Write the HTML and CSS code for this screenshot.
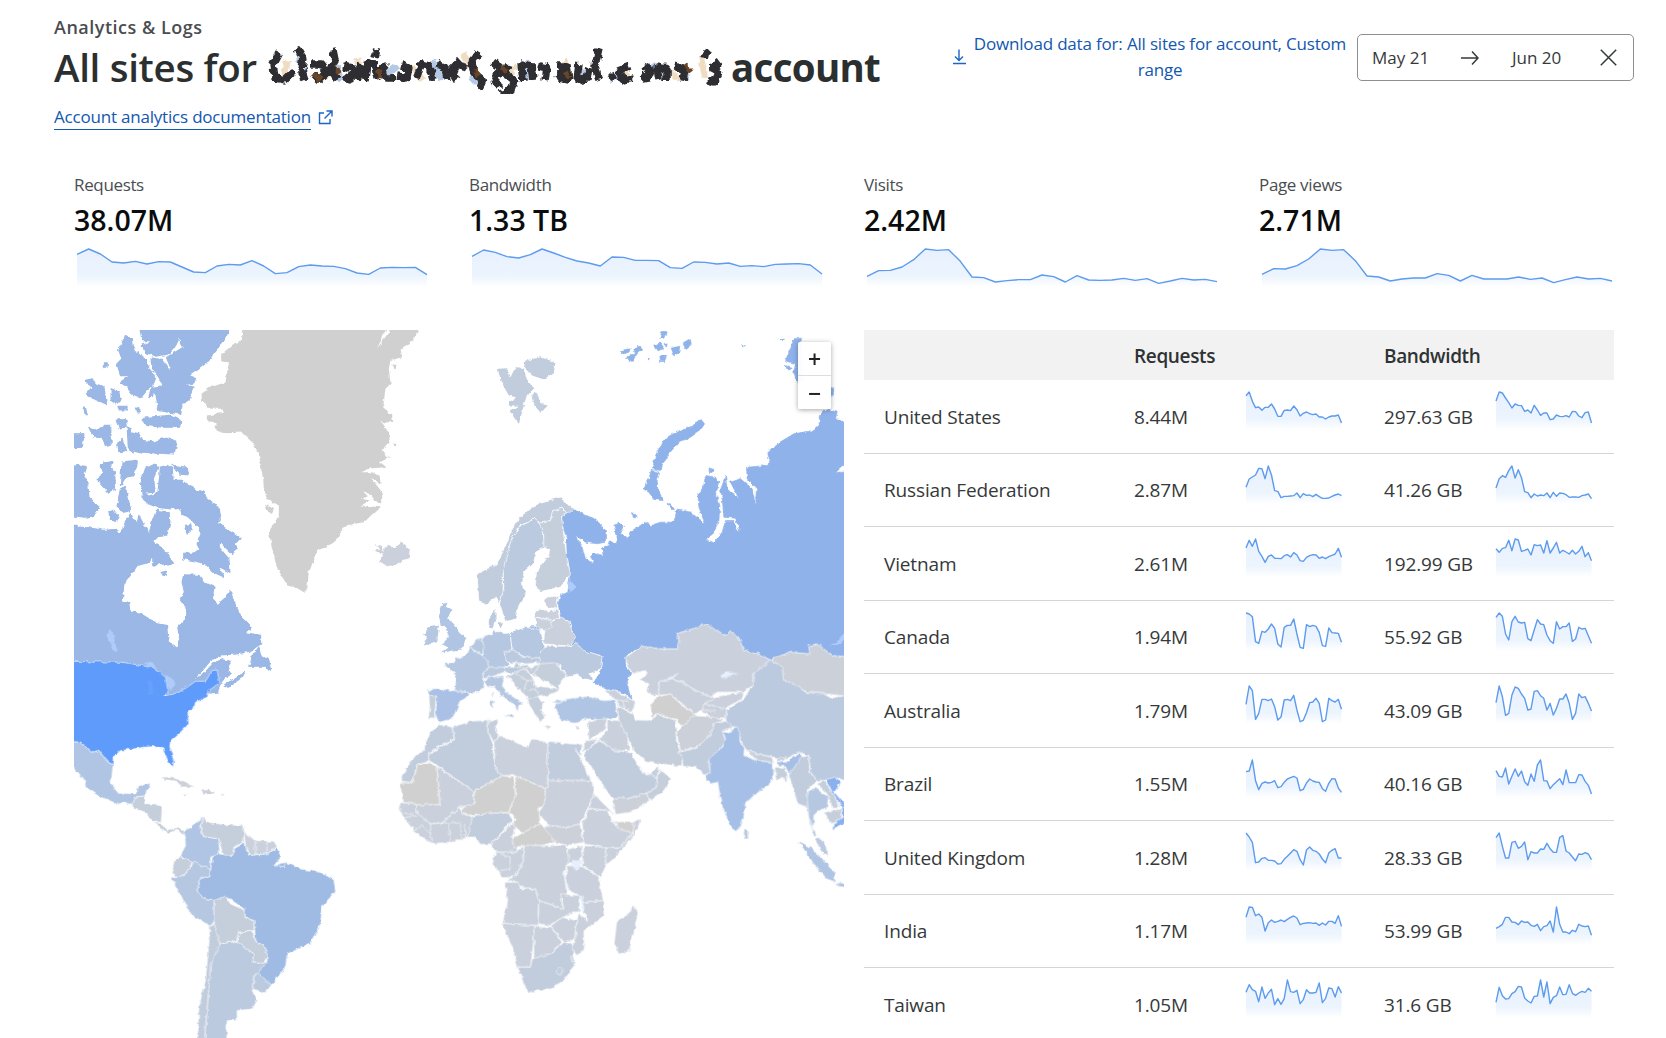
FILE: index.html
```html
<!DOCTYPE html>
<html lang="en">
<head>
<meta charset="utf-8">
<title>Account analytics</title>
<link rel="stylesheet" href="styles.css">
</head>
<body>
<header class="page-header">
  <div class="heading">
    <p class="eyebrow">Analytics &amp; Logs</p>
    <h1 class="title">
      <span class="title-lead">All sites for</span>
      <svg class="redacted" width="460" height="48" viewBox="0 0 460 48" aria-hidden="true">
        <defs><filter id="shard" x="-2%" y="-10%" width="104%" height="120%"><feTurbulence type="fractalNoise" baseFrequency=".22" numOctaves="1" seed="4"/><feDisplacementMap in="SourceGraphic" scale="7" xChannelSelector="R" yChannelSelector="G"/></filter></defs>
        <g filter="url(#shard)" fill="none" stroke-linejoin="bevel">
          <path class="tint-warm" d="M22 14l-4 18M52 34l14-6M92 12l4 22M146 20l12 14M198 8l12 18M240 32l12-12M300 14l6 18M356 20l8 14M402 22l12 12M436 10l4 22"/>
          <path class="tint-cool" d="M34 8l6 26M68 12l8 22M118 32l14-12M168 14l8 20M206 30l12 12M262 14l2 20M312 20l8 14M344 34l14-8M388 18l10 14M418 20l4 14"/>
          <path class="ink" d="M14 6l-6 12 2 14 10 2 8-8M32 2l6 10-2 10 4 12M46 18l10 0 6 8-8 8-6-6M68 4l2 10-4 10 6 10M78 20l10 2-2 12-8-2M96 18l-4 16M100 34l2-18 8 4 2 12M112 3l-2 8M122 18l-6 6 4 8 10 0M136 20l8 2-2 10-10-2M152 32l4-14 8 2 4 14M172 18l8 4 2 12M192 34l-6-10 8-8 6 8M214 6l-8 10 4 12 8 6-4 8M228 16l8 6-6 12 4 8M244 18l-4 12 10 4-4 10-10 4M258 34l-2-16 10 2 2 14M274 20l8 2-2 12M292 20l10 0 2 14-10-2 4-10M314 18l-2 16 10-2 2-10M334 2l-4 18 4 14M344 28l6 6M364 20l-10 4 4 10 10-2M378 20l8 4-4 10-6-6M394 34l-2-14 10 2 0 12M410 20l10 4-2 10M442 4l-2 8M454 16l-8 6 8 4-4 10-8-2"/>
          <path class="brown" d="M48 28l8 6M70 22l4 6M112 24l4 8M210 24l4 6M236 22l6 4M300 26l4 6M420 18l6 8"/>
        </g>
      </svg>
      <span class="title-tail">account</span>
    </h1>
    <p class="doc"><a class="doc-link" href="#">Account analytics documentation</a><svg class="external" width="15" height="15" viewBox="0 0 15 15"><path d="M6 3H1.500V13.500H12V9M8.500 1H14V6.500M14 1L6.500 8.500"/></svg></p>
  </div>
  <div class="actions">
    <a class="download" href="#">
      <svg width="16" height="16" viewBox="0 0 16 16"><path d="M8 .5V11M4 7.500L8 11.500L12 7.500M2 14.500H15"/></svg>
      <span>Download data for: All sites for account, Custom range</span>
    </a>
    <div class="dates">
      <span class="from">May 21</span>
      <svg width="18" height="16" viewBox="0 0 18 16"><path d="M0 8H17M11 1.500L17 8L11 14.500"/></svg>
      <span class="to">Jun 20</span>
      <svg class="clear" width="17" height="17" viewBox="0 0 17 17"><path d="M.8 .8L16.200 16.200M16.200 .8L.8 16.200"/></svg>
    </div>
  </div>
</header>

<section class="stats">
  <div class="stat"><p class="label">Requests</p><p class="value">38.07M</p><svg class="trend" data-y="284,268,283,307,310,305,313,306,307,322,337,339,319,314,316,303,319,342,339,321,316,319,320,327,340,344,325,323,324,323,345"></svg></div>
  <div class="stat"><p class="label">Bandwidth</p><p class="value">1.33 TB</p><svg class="trend" data-y="290,271,278,291,295,285,268,280,293,304,310,319,292,293,302,302,303,324,326,307,308,313,310,320,318,321,314,313,312,316,343"></svg></div>
  <div class="stat"><p class="label">Visits</p><p class="value">2.42M</p><svg class="trend" data-y="350,333,332,322,300,268,272,270,305,352,354,367,363,360,360,346,351,367,348,361,362,361,356,362,357,371,364,356,361,359,366"></svg></div>
  <div class="stat"><p class="label">Page views</p><p class="value">2.71M</p><svg class="trend" data-y="344,327,328,318,298,268,272,270,303,349,352,364,358,355,355,342,347,364,347,358,358,358,352,359,355,369,360,352,358,356,364"></svg></div>
</section>

<main class="content">
  <div class="map">
    <svg width="770" height="708" viewBox="74 330 770 708">
      <defs><filter id="coast" filterUnits="userSpaceOnUse" x="60" y="316" width="800" height="740"><feTurbulence type="fractalNoise" baseFrequency=".2" numOctaves="2" seed="9"/><feDisplacementMap in="SourceGraphic" scale="4" xChannelSelector="R" yChannelSelector="G"/></filter></defs>
      <g filter="url(#coast)">
      <!-- North Atlantic and the Arctic -->
      <g transform="translate(70.500 325.500) scale(.33333)">
        <g class="canada">
          <path d="M-20 600L20 600 20 640 24 605 60 608 100 615 140 612 150 630 165 590 180 565 200 600 205 570 235 628 245 590 258 555 295 560 298 590 290 625 265 630 245 650 270 665 295 690 305 715 285 720 265 710 250 725 250 690 235 710 200 720 190 735 175 750 160 775 155 825 175 835 180 860 205 862 235 880 260 895 288 900 292 945 320 968 328 940 322 905 348 880 350 850 330 820 342 800 335 770 340 748 385 750 400 770 430 785 425 820 445 838 465 820 478 795 495 840 515 880 545 905 525 922 570 930 570 955 540 975 500 985 450 988 420 1005 395 1035 360 1070 400 1045 430 1012 455 1003 482 1008 470 1025 480 1045 455 1062 440 1100 300 1115 280 1100 200 1030 -20 1020z"/>
          <path d="M215 518L215 500 235 512 262 505 268 450 270 425 290 420 305 430 308 465 335 465 345 475 380 495 400 500 410 520 445 545 450 575 440 590 480 620 508 640 490 655 500 670 485 685 450 650 445 665 475 700 478 740 440 720 462 755 430 740 405 715 370 705 340 700 340 680 365 685 385 670 380 655 392 625 385 605 360 580 335 565 325 545 300 550 260 545 235 535z"/>
          <path d="M210 475L225 430 255 415 262 425 248 460 255 500 215 503zM155 410L195 405 200 412 190 450 165 455 150 480zM150 490L165 485 175 530 180 555 160 560 140 545zM90 415L125 408 118 430 132 440 135 490 115 500 80 460 100 445zM-20 425L30 420 48 425 40 450 52 480 55 515 85 545 70 570 45 575-20 568zM115 560L130 555 145 575 135 590 120 580zM345 600L360 598 365 615 350 625zM305 420L345 425 352 448 325 445zM185 320L205 325 215 345 250 350 290 335 310 345 318 355 310 385 250 382 215 380 185 372zM275 740L288 738 282 750z"/>
          <path d="M205-10L490-10 475 15 460 45 430 80 415 105 385 130 355 150 375 158 370 172 335 178 370 185 355 225 335 235 330 265 265 255 260 225 255 200 235 215 245 185 280 182 262 150 245 130 242 98 272 102 298 137 302 130 288 96 345 62 330 55 330 30 315 60 290 86 255 92 225 80 215 60 250 45 215 45z"/>
          <path d="M215 280L240 275 300 270 330 285 328 305 280 305 230 300zM165 30L185 40 190 75 225 100 235 130 255 155 250 175 225 195 215 215 185 205 170 185 150 170 180 150 150 150 140 115 155 100 145 75zM45 165L65 160 75 175 100 185 108 235 80 225 48 205 65 185zM122 190L145 200 152 220 138 235 122 225zM55 305L80 315 100 300 120 300 122 355 105 360 95 335 70 335zM140 280L165 280 170 300 150 310zM142 350L155 342 168 375 145 378zM-20 325L40 325 35 365-20 368zM40 245L45 245 50 268 44 264zM142 243L170 243 168 253 145 253zM170 305L182 310 188 380 174 370zM102 112L110 112 110 125 102 125zM195 248L208 252 204 266z"/>
          <path d="M538 1025L545 995 565 965 570 990 595 1005 603 1035 585 1025zM463 1077L495 1060 522 1040 515 1055 470 1085z"/>
        </g>
        <path class="lake" d="M118 910L130 930 140 980 128 975 108 930z"/>
        <path class="gray coastline" d="M515-10L955-10 945 15 920 68 955 20 965-10 1060-10 1045 15 1020 55 990 70 995 95 960 105 955 130 960 175 945 190 938 245 965 270 968 290 930 290 955 320 958 350 935 375 948 395 960 395 925 410 945 425 900 428 872 440 905 440 928 452 930 475 900 455 935 500 935 530 915 530 895 505 875 495 892 512 870 520 900 525 870 540 928 545 880 590 825 600 800 645 765 665 740 675 730 705 715 740 710 790 700 800 675 785 650 780 630 745 615 710 605 670 595 620 610 595 625 570 625 540 590 520 580 490 578 460 565 385 545 350 510 318 450 322 430 305 440 295 412 285 412 270 460 262 455 250 420 250 395 225 393 205 420 185 465 170 475 110 455 108 455 85 490 55 515 40zM585 538L610 550 605 565 585 555zM965 118L978 118 975 132zM965 355L978 355 975 366z"/>
        <path class="t4 coastline" d="M912 655L935 665 935 680 950 658 975 665 995 650 1018 670 1015 695 970 722 945 718 925 710 940 690 912 675 930 672z"/>
        <path class="t9 coastline" d="M1115 835L1132 832 1125 845 1145 850 1130 880 1150 895 1165 920 1185 940 1180 960 1175 972 1145 975 1110 985 1135 965 1115 955 1135 935 1125 905 1110 900 1105 860z"/>
        <path class="t8 coastline" d="M1075 905L1105 900 1100 950 1060 960 1070 940 1060 925z"/>
      </g>
      <!-- Northern Europe and Russia -->
      <g transform="translate(460.500 325.500) scale(.33333)">
        <path class="t6 coastline" d="M112 130L140 128 150 155 160 135 175 125 190 130 200 165 222 190 200 205 190 240 175 295 160 275 148 255 175 240 145 240 145 230 170 215 145 210 120 165zM195 105L240 95 285 110 280 140 250 162 215 150 190 125zM215 205L230 200 240 235 262 240 240 262 222 240z"/>
        <g class="russia">
          <path d="M722 282L732 295 725 310 690 335 655 350 625 385 610 410 600 435 575 430 585 390 600 360 620 335 650 318 690 305zM572 435L598 440 590 465 592 490 608 525 580 522 565 500 548 490 565 460zM1000 40L1022 38 1030 170 1010 170 1000 140 1005 115 975 105 985 80zM972 120L995 125 985 137zM1110 185L1120 190 1118 210 1108 205z"/>
          <path d="M480 75L510 70 505 80 490 85zM520 70L535 60 545 72 530 85 515 108 498 100 508 88 525 86zM605 18L618 18 610 38 597 38zM578 60L598 52 610 70 590 76zM632 68L658 62 655 82 640 88zM668 55L690 42 692 58 675 70zM598 92L618 90 612 108 600 108zM610 55L620 52 618 65zM845 58L852 60 846 64zM958 40L972 42 965 47zM560 96L567 96 563 104zM512 565L530 568 522 580zM623 535L630 535 642 552 632 552zM745 430L760 435 748 442zM208 904L240 904 240 912 208 912z"/>
          <path d="M340 550L375 570 405 580 435 615 435 650 410 655 375 650 345 630 365 665 375 700 400 715 390 690 400 680 428 692 425 670 445 660 450 645 468 655 470 630 460 600 475 590 492 602 480 625 500 638 515 615 555 590 570 600 600 590 640 590 650 550 690 560 735 595 715 545 712 505 728 490 735 450 768 455 775 470 765 500 778 540 775 590 755 630 735 640 760 652 785 620 795 585 820 585 828 612 838 615 825 578 790 575 785 520 780 490 795 450 800 490 815 505 835 515 820 490 810 470 840 460 875 490 885 540 888 490 860 460 858 425 920 420 930 410 920 380 950 355 1000 325 1060 315 1075 300 1080 270 1100 250 1130 260 1125 280 1190 305 1190 425 1150 420 1125 440 1150 440 1190 430 1190 995 1115 990 1090 970 1065 955 1045 960 1048 985 985 980 930 1003 895 985 850 975 835 935 810 915 795 930 760 910 740 895 710 905 650 925 655 945 650 970 600 970 545 962 500 985 495 1015 510 1045 498 1070 512 1120 495 1105 460 1093 440 1093 400 1070 420 1040 425 990 370 975 330 955 345 935 325 885 300 875 293 835 300 810 322 800 330 740 320 690 318 640 305 590 305 570z"/>
        </g>
        <path class="lake" d="M318 768L335 770 348 785 330 800zM1105 960L1130 950 1152 920 1158 930 1135 958z"/>
        <path class="t6" d="M50 745L110 715 140 650 160 600 190 565 240 530 300 515 325 540 345 550 320 565 305 548 280 555 270 585 235 590 220 575 205 590 175 600 150 650 140 700 128 730 128 800 115 835 105 815 75 838 55 825z"/>
        <path class="t7" d="M220 575L240 595 250 635 252 665 225 680 220 710 190 740 182 775 198 800 175 840 165 880 135 890 118 835 130 790 128 730 150 650 178 602 205 590z"/>
        <path class="t5" d="M235 590L270 585 280 555 305 548 318 562 303 575 308 615 318 690 330 745 300 785 240 798 225 780 228 740 265 690 268 670 250 662 250 630z"/>
        <path class="t7 coastline" d="M85 880L105 850 105 880 95 910 85 905zM108 890L128 890 120 905z"/>
        <path class="t4" d="M250 815L292 812 290 850 260 845zM225 855L245 850 262 860 290 850 298 880 270 885 225 875zM225 875L275 882 280 900 260 918 240 912 225 900z"/>
        <path class="t4" d="M270 890L300 875 325 888 345 935 328 962 250 955 252 915 275 905z"/>
        <path class="t8" d="M150 920L195 905 240 912 250 960 245 998 200 998 155 975 150 940zM70 930L95 925 100 910 110 922 148 920 155 972 130 985 148 1020 105 1035 70 1030 68 985 62 960z"/>
        <path class="t7" d="M250 962L330 962 345 950 370 975 425 992 420 1030 385 1045 400 1065 370 1060 350 1045 320 1055 300 1020 235 1025 240 990z"/>
      </g>
      <!-- The Americas -->
      <g transform="translate(70.500 660.500) scale(.33333)">
        <path class="usa" d="M-20 2L155 5 215 15 250 22 285 50 292 95 280 108 325 95 350 80 375 62 405 62 425 30 440 28 445 60 450 65 415 90 410 110 375 125 370 145 352 155 355 190 330 215 300 240 298 262 310 300 308 320 290 300 280 265 250 258 220 260 190 265 150 270 128 290 128 313 112 305 85 270 65 275 30 245-20 243z"/>
        <path class="lake" d="M215 2L245 5 262 25 240 22zM285 42L310 58 315 75 300 90 290 75z"/>
        <path class="usa-lake" d="M235 55L245 60 245 100 232 110z"/>
        <path class="t9" d="M-20 243L30 245 65 275 85 270 112 305 128 313 122 365 140 398 195 400 205 375 240 368 225 405 195 410 185 435 165 425 145 430 90 410 45 380 40 355 12 325-20 300z"/>
        <path class="t5" d="M185 435L195 410 225 405 222 430 250 430 275 438 272 485 250 485 225 455 190 445zM250 485L275 490 290 508 325 500 345 515 340 525 325 508 290 517z"/>
        <path class="t3 coastline" d="M270 355L300 348 370 378 335 378 315 360zM392 390L415 388 435 397 400 402zM335 402L350 402 345 407zM450 401L463 402 455 405z"/>
        <path class="t9" d="M400 470L388 500 400 528 445 535 448 580 420 590 420 640 370 610 330 585 345 555 342 515 370 490z"/>
        <path class="t5" d="M400 470L410 485 460 492 520 495 520 545 490 560 485 585 460 592 445 535 400 528 390 500z"/>
        <path class="t4" d="M520 512L550 540 610 542 620 558 590 580 540 585 525 560zM553 540L555 582M588 542L590 580"/>
        <path class="t5" d="M330 588L365 605 345 640 320 652 305 635 310 600z"/>
        <path class="t8" d="M300 648L320 652 345 640 370 605 420 628 418 645 390 655 380 690 400 712 430 720 432 780 420 798 360 760z"/>
        <path class="brazil" d="M448 580L485 588 490 565 520 548 535 585 590 580 620 562 632 590 610 615 645 605 690 625 750 635 790 658 795 690 755 740 750 790 720 850 650 880 645 920 600 978 560 935 590 900 585 860 555 840 550 780 525 770 520 745 470 710 430 720 400 712 380 690 390 655 418 645 425 590z"/>
        <path class="t5" d="M430 720L468 706 480 730 520 748 525 772 550 780 550 810 505 815 498 840 445 852 430 790zM505 815L545 812 555 842 585 860 590 890 580 905 545 905 550 880 500 845z"/>
        <path class="t7" d="M560 935L600 970 585 997 545 985 550 945zM445 852L498 842 550 880 545 905 590 905 550 950 545 990 560 1020 545 1045 500 1050 500 1080 470 1080 468 1160 400 1160 410 1040 420 900z"/>
        <path class="t6" d="M418 795L432 790 448 852 420 910 410 1040 400 1160 380 1160 385 1040 405 960 415 850z"/>
        <path class="river" d="M612 616L645 618 642 606"/>
      </g>
      <!-- Southern Europe, Africa and Asia -->
      <g transform="translate(380.500 660.500) scale(.33333)">
        <path class="t8" d="M190 12L225 0 225-5 255-15 268-38 300-22 320 0 325 20 305 45 312 80 295 95 268 97 222 90 228 50 215 30zM268-38L285-60 305-70 310-40 305-15z"/>
        <path class="t10" d="M142 90L160 84 222 90 268 98 262 110 240 120 228 150 215 175 180 185 165 170 168 110 145 105z"/>
        <path class="t5" d="M145 105L167 110 162 175 143 175 148 140z"/>
        <path class="t7" d="M305 45L325 20 395 20 410 5 430 25 400 38 370 35 345 45 310 55zM370-25L395-33 430-10 480-8 480 5 440 10 405 8 380 5z"/>
        <path class="t8" d="M310 60L330 50 365 45 370 60 365 75 385 100 430 130 415 135 412 155 400 130 360 105 345 80 320 80zM370 163L400 162 398 175zM329 120L340 120 338 142 330 142zM332 97L339 97 336 115z"/>
        <path class="t5" d="M375 50L405 35 430 25 480 10 530 5 545 30 560 45 540 60 535 90 500 105 470 110 490 125 480 150 495 165 480 185 465 165 445 130 440 110 405 75 390 55zM430 25L455 45 465 75 535 85M405 40L440 60 430 90M440 60L460 60M465 75L475 108M445 90L470 85M455 45L480 10M530 5L545 30M445 115L470 108M405 20L440 12 455 28"/>
        <path class="t4 coastline" d="M490 198L512 198 508 203zM585 200L600 198 592 208z"/>
        <path class="t9" d="M525 130L560 115 620 108 670 120 705 118 712 170 660 178 620 175 585 185 545 180 525 150zM512 122L545 118 535 130z"/>
        <path class="t4" d="M675 90L700 88 740 110 765 125 755 155 735 145 715 135 705 115 690 105zM705 118L745 122M725 120L735 145"/>
        <path class="t4" d="M735-10L785-43 840-35 890-35 895-60 890-80 950-100 980-110 1035-75 1050-90 1075-70 1090-30 1135-20 1170-2 1150 20 1120 40 1120 70 1090 95 1060 95 1010 95 990 110 945 90 905 65 870 55 835 65 835 110 800 95 805 70 775 60 800 40 795 30 755 40 738 5z"/>
        <path class="t3" d="M1170-2L1225-25 1288-20 1285-45 1310-50 1330-35 1355-15 1430-10 1430 110 1330 100 1280 95 1210 60 1200 20z"/>
        <path class="t7" d="M1170-2L1205 20 1210 60 1250 75 1275 95 1330 100 1350 112 1430 100 1430 360 1392 360 1365 350 1335 360 1310 360 1290 335 1285 285 1255 275 1215 295 1180 290 1125 280 1090 262 1080 230 1060 200 1035 185 1038 150 1090 115 1120 65 1120 40z"/>
        <path class="t4" d="M835 65L870 55 905 65 945 90 990 110 1090 95 1085 115 1040 140 1035 175 1000 175 960 150 945 160 905 130 870 100 835 105zM965 150L970 130 1000 115 1020 100M970 130L1038 145M960 150L1005 150"/>
        <path class="gray" d="M810 130L830 110 870 100 900 130 945 160 915 195 905 200 885 175 830 160 812 170z"/>
        <path class="t3" d="M888 215L905 200 940 165 1000 170 1030 180 1000 190 990 225 950 260 900 272z"/>
        <path class="t5" d="M710 135L750 155 765 178 812 180 830 162 885 178 888 240 905 290 905 318 840 310 800 305 760 270 735 220 715 180z"/>
        <path class="t4" d="M622 182L680 175 672 210 625 240zM680 178L715 180 735 215 750 270 700 270 655 235 680 210zM608 275L612 240 625 240 652 235 625 265z"/>
        <path class="t6" d="M608 285L625 265 655 238 700 270 750 275 785 335 830 350 828 380 795 400 750 412 695 415 655 355z"/>
        <path class="t5" d="M830 350L838 325 872 355 850 390 810 418 795 400 828 380zM785 335L810 340 835 318 830 350z"/>
        <path class="t3" d="M695 412L750 412 795 398 808 420 750 455 705 462z"/>
        <path class="t6" d="M895 275L950 262 990 225 1000 190 1040 180 1060 200 1025 210 1035 240 1000 290 985 300 990 335 975 345 945 318 908 318 905 290z"/>
        <path class="t11" d="M1025 210L1050 215 1065 198 1078 215 1078 240 1092 265 1090 285 1130 300 1178 305 1180 340 1165 375 1130 395 1095 430 1090 470 1080 500 1065 513 1045 490 1020 420 1012 365 990 370 975 350 990 335 985 295 1020 265 1035 235zM1185 303L1215 305 1260 275 1265 290 1245 320 1225 345 1215 315 1190 315z"/>
        <path class="t5" d="M1092 265L1125 280 1175 290 1178 305 1130 300zM1182 320L1215 320 1220 365 1205 350 1190 360zM1185 292L1215 292 1212 302 1188 302z"/>
        <path class="t7 coastline" d="M1092 505L1105 515 1100 535 1090 530z"/>
        <path class="t6" d="M1225 345L1262 290 1285 285 1288 335 1310 360 1280 390 1285 430 1300 480 1290 500 1278 440 1250 428 1240 390z"/>
        <path class="t8" d="M1285 390L1305 382 1345 410 1340 440 1310 455 1300 465 1300 505 1285 470 1280 410z"/>
        <path class="t5" d="M1310 370L1330 360 1355 395 1380 440 1355 440 1340 400zM1330 455L1385 445 1380 475 1350 490z"/>
        <path class="vietnam" d="M1335 358L1365 348 1382 365 1362 395 1392 430 1400 485 1358 508 1362 488 1385 470 1385 440 1355 395z"/>
        <path class="t7 coastline" d="M1305 530L1320 535 1340 560 1342 585 1320 570zM1288 495L1308 522 1300 525z"/>
        <path class="t9 coastline" d="M1255 542L1290 560 1330 600 1365 635 1362 662 1340 655 1300 610zM1365 668L1430 668 1430 686 1370 675z"/>
        <path class="t6" d="M175 192L215 200 222 235 145 275 145 300 112 310 100 345 95 365 60 365 75 325 105 285 135 265 140 230zM215 200L270 182 325 178 322 210 335 245 345 325 365 345 280 393 170 315 145 300 145 278 222 238z"/>
        <path class="t5" d="M325 178L350 180 345 210 355 225 340 245 322 212z"/>
        <path class="t4" d="M340 245L358 225 440 260 455 235 502 245 502 382 495 385 405 345 365 345 345 325z"/>
        <path class="t6" d="M502 245L550 248 605 252 600 288 585 265 632 360 502 360z"/>
        <path class="t4" d="M502 360L635 360 640 400 620 450 600 490 560 500 505 495 475 460 492 420 495 385 502 382z"/>
        <path class="gray" d="M405 345L495 385 492 430 475 440 480 490 430 515 395 500 405 470 385 455 405 400zM365 345L400 350 405 400 385 455 320 460 280 465 245 460 245 440 280 430 282 393z"/>
        <path class="t4" d="M170 318L280 393 280 430 240 440 185 485 150 490 110 460 105 432 178 432z"/>
        <path class="gray" d="M60 367L95 367 112 312 145 305 170 320 178 432 105 432 65 425z"/>
        <path class="t4" d="M60 425L105 432 110 460 150 490 185 487 240 440 245 460 280 468 275 500 265 530 210 545 155 550 110 520 75 480 55 445zM70 472L110 465M70 458L100 460M100 510L125 495 150 520 155 550M150 490L150 520M205 490L210 545M185 487L245 485M240 490L245 535M252 490L255 532"/>
        <path class="t6" d="M275 470L320 458 385 457 395 480 360 520 330 550 300 552 285 530 262 530z"/>
        <path class="t4" d="M395 485L405 500 395 530 410 565 410 575 345 575 330 550 365 520z"/>
        <path class="gray" d="M395 535L430 515 480 490 505 510 525 545 480 555 430 555 400 562z"/>
        <path class="t3" d="M490 500L505 495 560 500 598 490 610 545 560 555 525 545z"/>
        <path class="t4" d="M625 445L680 450 700 490 760 515 720 560 670 560 610 550 605 490zM640 400L705 465 680 450 625 443zM755 485L782 475 765 520 700 595 675 615 675 560 720 560 758 515z"/>
        <path class="gray" d="M697 478L715 487 760 485 758 515 720 508z"/>
        <path class="t4" d="M610 555L675 560 675 620 660 650 605 615zM565 565L605 555 608 590 580 610 560 610zM560 615L605 618 655 650 668 720 605 725 595 705 565 690 555 650z"/>
        <path class="t4" d="M430 555L560 555 565 600 550 640 560 700 540 715 550 745 475 720 465 685 420 680 400 660 375 662 410 640 425 600zM345 575L405 575 430 555 430 600 405 645 370 655 335 610zM360 580L388 590 390 625 358 630"/>
        <path class="t4" d="M372 665L412 665 420 685 465 685 475 720 472 795 365 788 382 720zM475 720L550 745 540 700 595 705 600 750 545 770 510 795 472 790z"/>
        <path class="t4" d="M605 725L668 720 670 765 610 812 612 865 590 885 575 870 590 780 595 755 618 780zM510 798L545 770 590 780 585 835 550 845zM365 788L510 798 460 800 460 840 450 920 412 920 395 860zM460 800L510 798 545 845 510 880 460 900z"/>
        <path class="t6" d="M412 920L450 920 455 895 510 880 550 845 575 848 578 885 585 905 550 960 510 985 445 995 430 970zM538 918L550 930 538 945 526 930zM570 890L582 893 575 905z"/>
        <path class="t4 coastline" d="M762 735L772 770 745 870 715 880 702 850 710 780 740 765z"/>
        <path class="pale-lake" d="M575 600L605 598 595 628 578 625zM1020 45L1035 35 1082 38 1050 44 1025 57zM860 55L890 38 892 42 870 60zM548 640L552 640 568 690 562 690zM600 705L606 705 612 755 606 752zM778 315L788 335 780 332z"/>
      </g>
      </g>
    </svg>
    <div class="zoom"><button class="zoom-btn">+</button><button class="zoom-btn">−</button></div>
  </div>

  <table class="countries">
    <colgroup><col class="c-name"><col class="c-num"><col class="c-trend"><col class="c-num"><col class="c-trend"></colgroup>
    <thead><tr><th></th><th>Requests</th><th></th><th>Bandwidth</th><th></th></tr></thead>
    <tbody>
      <tr><td>United States</td><td>8.44M</td><td><svg class="mini" data-y="78,67,95,114,112,122,113,113,103,118,140,140,122,121,123,109,120,139,131,127,132,135,133,142,142,148,142,139,139,136,160"></svg></td><td>297.63 GB</td><td><svg class="mini" data-y="94,67,70,85,99,115,103,107,108,125,121,130,107,121,137,130,130,150,148,136,140,141,138,142,125,126,139,144,129,127,160"></svg></td></tr>
      <tr><td>Russian Federation</td><td>2.87M</td><td><svg class="mini" data-y="350,325,319,313,293,294,324,286,313,360,362,381,377,377,376,375,367,381,369,374,373,378,371,378,383,383,382,377,373,370,375"></svg></td><td>41.26 GB</td><td><svg class="mini" data-y="352,324,315,320,300,286,322,297,321,363,366,381,370,376,373,375,367,381,365,377,367,368,372,380,379,379,380,375,373,370,384"></svg></td></tr>
      <tr><td>Vietnam</td><td>2.61M</td><td><svg class="mini" data-y="535,512,530,508,545,560,578,560,556,566,566,567,558,555,562,549,556,573,575,563,558,555,556,566,562,567,561,557,553,536,563"></svg></td><td>192.99 GB</td><td><svg class="mini" data-y="537,548,536,534,512,543,508,511,545,542,538,556,525,528,526,550,513,550,535,518,550,542,547,553,542,553,545,530,561,549,573"></svg></td></tr>
      <tr><td>Canada</td><td>1.94M</td><td><svg class="mini" data-y="727,730,738,813,818,782,785,775,760,773,820,829,770,764,764,745,790,830,833,762,768,764,767,785,825,827,772,786,787,788,815"></svg></td><td>55.92 GB</td><td><svg class="mini" data-y="740,727,737,790,808,753,737,754,757,755,804,810,778,747,760,762,793,810,818,753,775,768,768,757,812,805,770,775,773,795,818"></svg></td></tr>
      <tr><td>Australia</td><td>1.79M</td><td><svg class="mini" data-y="1003,948,962,1048,1030,988,988,992,987,1010,1050,1041,990,988,992,976,1020,1055,1051,1028,998,996,985,1000,1055,1050,985,992,996,988,1018"></svg></td><td>43.09 GB</td><td><svg class="mini" data-y="998,948,980,1036,1030,975,951,955,972,985,1020,1017,964,962,977,985,1020,1000,1035,1015,987,987,972,1000,1048,1030,972,983,980,1000,1023"></svg></td></tr>
      <tr><td>Brazil</td><td>1.55M</td><td><svg class="mini" data-y="213,211,178,240,267,248,244,247,245,240,261,258,245,235,231,227,232,270,266,247,235,241,244,245,264,272,248,234,235,262,275"></svg></td><td>40.16 GB</td><td><svg class="mini" data-y="210,227,229,202,250,227,205,227,211,243,254,220,242,193,178,240,241,264,252,243,234,252,208,246,246,246,222,223,242,254,280"></svg></td></tr>
      <tr><td>United Kingdom</td><td>1.28M</td><td><svg class="mini" data-y="400,412,428,489,487,476,474,482,482,484,493,492,479,470,460,450,455,480,496,451,442,452,455,463,478,489,460,452,447,475,475"></svg></td><td>28.33 GB</td><td><svg class="mini" data-y="414,400,440,475,475,428,425,446,440,427,480,456,460,460,448,449,431,447,458,458,413,408,454,460,472,483,463,464,459,463,480"></svg></td></tr>
      <tr><td>India</td><td>1.17M</td><td><svg class="mini" data-y="650,619,620,645,640,650,691,666,658,665,662,658,663,656,650,646,652,672,668,667,666,668,667,674,667,673,662,662,668,645,677"></svg></td><td>53.99 GB</td><td><svg class="mini" data-y="683,678,671,650,650,664,665,672,661,665,664,674,677,671,690,678,675,661,694,619,671,694,694,699,689,693,671,676,678,676,704"></svg></td></tr>
      <tr><td>Taiwan</td><td>1.05M</td><td><svg class="mini" data-y="878,855,870,875,906,862,896,880,869,915,897,914,897,841,876,878,872,912,900,870,880,880,878,850,909,896,865,867,892,861,880"></svg></td><td>31.6 GB</td><td><svg class="mini" data-y="908,863,888,898,897,882,876,860,862,895,904,910,890,889,841,892,847,912,893,888,862,885,884,855,881,887,880,875,878,866,875"></svg></td></tr>
    </tbody>
  </table>
</main>
<svg width="0" height="0" class="defs"><defs><linearGradient id="fade" gradientUnits="userSpaceOnUse" x1="0" y1="0" x2="0" y2="40"><stop offset="0" stop-color="#e7f0fd"/><stop offset=".72" stop-color="#ecf4fe"/><stop offset="1" stop-color="#fff"/></linearGradient></defs></svg>
<script src="sparklines.js"></script>
</body>
</html>
```
FILE: styles.css
```css
* { box-sizing: border-box; }
body { margin: 0; width: 1666px; height: 1038px; overflow: hidden; background: #fff; color: #36393a; font-family: "Open Sans", "Noto Sans", sans-serif; }
p, h1 { margin: 0; }
a { color: #1257b0; text-decoration: none; }
svg { display: block; fill: none; }

.page-header { display: flex; justify-content: space-between; height: 173px; padding: 0 32px 0 54px; }
.heading { padding-top: 14px; }
.eyebrow { font-size: 18px; line-height: 26px; font-weight: 600; letter-spacing: .5px; color: #4a4d4f; }
.title { display: flex; align-items: center; height: 56px; margin-top: -1px; font-size: 38.500px; line-height: 56px; font-weight: 600; color: #2c2f30; white-space: nowrap; }
.title-lead { width: 211px; letter-spacing: -.3px; }
.redacted { width: 460px; margin: 5px 6px 0 0; }
.title-tail { font-weight: 700; letter-spacing: -.7px; }
.ink { stroke: #2d2d31; stroke-width: 7.500; }
.tint-warm { stroke: #f0dcc0; stroke-width: 6; }
.tint-cool { stroke: #b5c9e6; stroke-width: 7; }
.brown { stroke: #6b4526; stroke-width: 5; }
.doc { display: flex; align-items: center; gap: 7px; margin-top: 8px; height: 28px; }
.doc-link { font-size: 17px; line-height: 24px; letter-spacing: -.2px; border-bottom: 1.500px solid #1257b0; }
.external path, .download path { stroke: #1f66c4; stroke-width: 1.400; }

.actions { display: flex; align-items: flex-start; gap: 6px; padding-top: 30px; }
.download { display: flex; align-items: center; gap: 2px; padding-top: 1px; text-align: center; font-size: 17px; line-height: 26px; letter-spacing: -.18px; }
.download span { width: 382px; }
.dates { display: flex; align-items: center; width: 277px; height: 47px; margin-top: 4px; padding: 0 16px 0 14px; border: 1px solid #8d8f92; border-radius: 5px; font-size: 17px; }
.from { width: 89px; }
.to { margin-left: 33px; }
.clear { margin-left: auto; }
.dates path { stroke: #36393a; stroke-width: 1.500; }

.stats { display: grid; grid-template-columns: repeat(4, 395px); height: 157px; padding-left: 74px; }
.label { font-size: 17px; line-height: 24px; letter-spacing: -.35px; color: #4a4d4f; }
.value { font-size: 28.500px; line-height: 36px; margin-top: 5px; font-weight: 600; color: #0b0c0d; }
.trend { width: 354px; height: 42px; margin: 9px 0 0 1.500px; }
.line { stroke: #5c9bee; stroke-width: 1.400; stroke-linejoin: round; }
.area { fill: url(#fade); }

.content { display: grid; grid-template-columns: 770px 750px; gap: 20px; padding-left: 74px; }
.map { position: relative; height: 708px; overflow: hidden; }
.map path { stroke: #fff; stroke-width: 1.900; stroke-linejoin: round; }
.canada path { fill: #9ab7e5; stroke: #9ab7e5; stroke-width: 4; }
.map .coastline { stroke: none; }
.russia path { fill: #8fb2ea; stroke: #8fb2ea; stroke-width: 2; }
.usa { fill: #5f9bfb; }
.brazil { fill: #9fbbe4; }
.vietnam { fill: #8ab0ee; }
.map .gray { fill: #d0d0d0; }
.map .lake { fill: #aecbfc; stroke: none; }
.map .usa-lake { fill: #68a1fc; stroke: none; }
.map .pale-lake { fill: #e5effd; stroke: none; }
.t3 { fill: #ccd1d9; }
.t4 { fill: #cad1dc; }
.t5 { fill: #c5cedb; }
.t6 { fill: #c1ccdd; }
.t7 { fill: #bccadf; }
.t8 { fill: #b5c7e1; }
.t9 { fill: #b0c4e3; }
.t10 { fill: #aac1e5; }
.t11 { fill: #a6bfe6; }
.zoom { position: absolute; top: 12px; right: 13px; width: 33px; height: 67px; display: flex; flex-direction: column; background: rgba(255,255,255,.96); border-radius: 2px; box-shadow: 0 1px 5px rgba(0,0,0,.35); }
.zoom-btn { flex: 1; padding: 0; border: 0; background: none; font: 600 23px/30px "Open Sans", sans-serif; color: #222; }
.zoom-btn + .zoom-btn { border-top: 1px solid #ddd; }

.countries { width: 750px; border-collapse: separate; border-spacing: 0; table-layout: fixed; font-size: 19px; letter-spacing: -.15px; color: #36393a; align-self: start; }
.c-name { width: 250px; }
.c-num { width: 131px; }
.c-trend { width: 119px; }
.countries th { height: 50px; padding: 2px 0 0 20px; background: #f2f2f2; text-align: left; font-weight: 600; letter-spacing: -.35px; color: #2f3233; }
.countries td { height: 73.500px; padding: 1px 0 0 20px; border-bottom: 1px solid #d5d5d5; white-space: nowrap; }
.countries td:nth-child(3), .countries td:nth-child(5) { padding: 0; vertical-align: top; }
.mini { width: 98px; height: 44px; margin-top: 10px; }
.defs { position: absolute; }
```
FILE: sparklines.js
```js
// Draws a line and a faded area for every element that carries a data-y series.
function draw(svg, step, base) {
  const ys = svg.dataset.y.split(',').map(Number);
  const top = Math.min(...ys);
  const pts = ys.map((y, i) => (1 + i * step).toFixed(2) + ' ' + ((y - top) / 3 + 2).toFixed(2));
  const right = (1 + (ys.length - 1) * step).toFixed(2);
  svg.innerHTML = `<path class="area" d="M1 ${base}L${pts.join('L')}L${right} ${base}Z"/><path class="line" d="M${pts.join('L')}"/>`;
}
document.querySelectorAll('.trend').forEach(s => draw(s, 350 / 30, 40));
document.querySelectorAll('.mini').forEach(s => draw(s, 95.5 / 30, 40));
```
